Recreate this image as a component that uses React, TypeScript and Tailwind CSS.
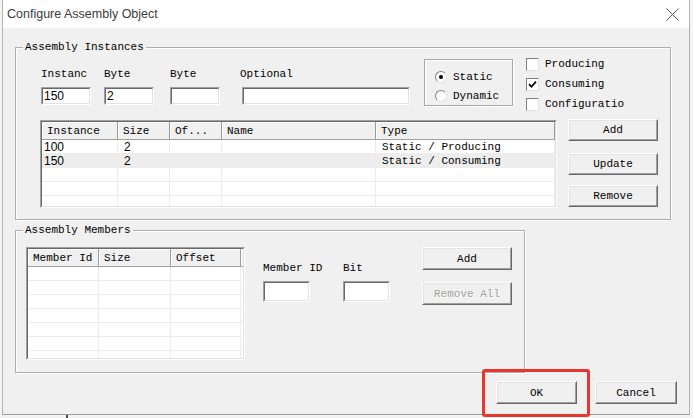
import React from 'react';

const mono = "font-['Liberation_Mono',monospace] text-[11px] leading-[14px]";
const sans = "font-['Liberation_Sans',Arial,sans-serif] text-[12px] leading-[14px]";

type Col = { label: string; w: string; font: string; pl: string };

function ListView({
  cols,
  rows,
  className,
  highlight,
}: {
  cols: Col[];
  rows: string[][];
  className: string;
  highlight?: number;
}) {
  return (
    <div className={`border border-t-[#a0a0a0] border-l-[#a0a0a0] border-b-[#fdfdfd] border-r-[#fdfdfd] ${className}`}>
      <div className="h-full overflow-hidden bg-white border border-t-[#696969] border-l-[#696969] border-b-[#e3e3e3] border-r-[#e3e3e3]">
        <div className="flex h-[18px] bg-[#f0f0f0] border-b border-b-[#a0a0a0]">
          {cols.map((c) => (
            <div
              key={c.label}
              className={`${c.w} shrink-0 flex items-center pl-[5px] whitespace-nowrap overflow-hidden border-r border-r-[#9a9a9a] shadow-[inset_1px_1px_0_#ffffff] ${mono}`}
            >
              {c.label}
            </div>
          ))}
          <div className="flex-1 shadow-[inset_1px_1px_0_#ffffff]" />
        </div>
        {rows.map((r, i) => (
          <div
            key={i}
            className={`flex h-[14px] border-b border-b-[#ececec] ${i === highlight ? 'bg-[#ededed]' : ''}`}
          >
            {cols.map((c, j) => (
              <div
                key={j}
                className={`${c.w} shrink-0 flex items-center whitespace-nowrap overflow-hidden border-r border-r-[#ececec] ${c.pl} ${c.font}`}
              >
                {r[j]}
              </div>
            ))}
          </div>
        ))}
      </div>
    </div>
  );
}

function Field({ value, className }: { value?: string; className: string }) {
  return (
    <div className={`bg-white border border-t-[#a0a0a0] border-l-[#a0a0a0] border-b-white border-r-white ${className}`}>
      <div className={`h-full flex items-center pl-[1px] border border-t-[#696969] border-l-[#696969] border-b-[#e3e3e3] border-r-[#e3e3e3] ${sans}`}>
        {value}
      </div>
    </div>
  );
}

function Btn({ label, className, disabled }: { label: string; className: string; disabled?: boolean }) {
  return (
    <div className={`bg-[#f0f0f0] border border-t-white border-l-white border-b-[#696969] border-r-[#696969] ${className}`}>
      <div
        className={`h-full flex items-center justify-center border border-t-[#e3e3e3] border-l-[#e3e3e3] border-b-[#a0a0a0] border-r-[#a0a0a0] ${mono} ${
          disabled ? 'text-[#a0a0a0] [text-shadow:1px_1px_0_#ffffff]' : ''
        }`}
      >
        {label}
      </div>
    </div>
  );
}

function Radio({ checked }: { checked?: boolean }) {
  return (
    <div className="w-[12px] h-[12px] shrink-0 rounded-full bg-white border border-t-[#808080] border-l-[#808080] border-b-[#e3e3e3] border-r-[#e3e3e3] flex items-center justify-center">
      {checked && <div className="w-[4px] h-[4px] rounded-full bg-black" />}
    </div>
  );
}

function Check({ checked, label }: { checked?: boolean; label: string }) {
  return (
    <div className="flex items-center h-[20px]">
      <div className="w-[13px] h-[13px] shrink-0 bg-white border border-t-[#808080] border-l-[#808080] border-b-[#e3e3e3] border-r-[#e3e3e3] flex items-center justify-center">
        {checked && (
          <svg width="9" height="9" viewBox="0 0 9 9">
            <path d="M1 4.2 L3.4 6.8 L8 1.6" fill="none" stroke="#000" strokeWidth="1.7" />
          </svg>
        )}
      </div>
      <span className={`ml-[6px] whitespace-nowrap ${mono}`}>{label}</span>
    </div>
  );
}

const instanceCols: Col[] = [
  { label: 'Instance', w: 'w-[76px]', font: sans, pl: 'pl-[2px]' },
  { label: 'Size', w: 'w-[52px]', font: sans, pl: 'pl-[6px]' },
  { label: 'Of...', w: 'w-[52px]', font: sans, pl: 'pl-[6px]' },
  { label: 'Name', w: 'w-[154px]', font: mono, pl: 'pl-[6px]' },
  { label: 'Type', w: 'w-[179px]', font: mono, pl: 'pl-[6px]' },
];

const memberCols: Col[] = [
  { label: 'Member Id', w: 'w-[71px]', font: sans, pl: 'pl-[2px]' },
  { label: 'Size', w: 'w-[72px]', font: sans, pl: 'pl-[6px]' },
  { label: 'Offset', w: 'w-[70px]', font: sans, pl: 'pl-[6px]' },
];

export default function App() {
  return (
    <div className="relative w-[693px] h-[418px] overflow-hidden bg-[#f4f4f4] text-black">
      <div className="ml-[2px] w-[688px] h-[415px] flex flex-col border-x border-b border-x-[#b4b4b4] border-b-[#9a9a9a] bg-[#f0f0f0]">
        <div className="h-[28px] shrink-0 bg-white flex items-center justify-between pl-[4px] pr-[10px]">
          <span className="font-['Liberation_Sans',Arial,sans-serif] text-[12.5px] text-[#3c3c3c]">
            Configure Assembly Object
          </span>
          <svg width="13" height="13" viewBox="0 0 13 13">
            <path d="M0.5 0.5 L12.5 12.5 M12.5 0.5 L0.5 12.5" stroke="#5a5a5a" strokeWidth="1" />
          </svg>
        </div>

        <div className="flex-1 pl-[12px] pt-[19px]">
          {/* Assembly Instances */}
          <div className="relative w-[656px] h-[173px] border border-[#adadad] shadow-[inset_1px_1px_0_#ffffff,1px_1px_0_#ffffff]">
            <span className={`absolute top-[-8px] left-[7px] px-[2px] bg-[#f0f0f0] ${mono}`}>Assembly Instances</span>

            <div className="flex items-start h-[72px] pt-[9px]">
              <div className="flex ml-[25px]">
                <div className="flex flex-col w-[50px]">
                  <span className={`mt-[10px] whitespace-nowrap ${mono}`}>Instanc</span>
                  <Field value="150" className="mt-[6px] h-[18px] w-[50px]" />
                </div>
                <div className="flex flex-col w-[50px] ml-[13px]">
                  <span className={`mt-[10px] whitespace-nowrap ${mono}`}>Byte</span>
                  <Field value="2" className="mt-[6px] h-[18px] w-[50px]" />
                </div>
                <div className="flex flex-col w-[50px] ml-[16px]">
                  <span className={`mt-[10px] whitespace-nowrap ${mono}`}>Byte</span>
                  <Field className="mt-[6px] h-[18px] w-[50px]" />
                </div>
                <div className="flex flex-col w-[168px] ml-[22px]">
                  <span className={`mt-[10px] -ml-[2px] whitespace-nowrap ${mono}`}>Optional</span>
                  <Field className="mt-[6px] h-[18px] w-[168px]" />
                </div>
              </div>

              <div className="ml-[14px] mt-[2px] w-[89px] h-[47px] flex flex-col gap-[7px] pt-[11px] pl-[10px] border border-[#a8a8a8] shadow-[inset_1px_1px_0_#ffffff,1px_1px_0_#ffffff]">
                <div className="flex items-center h-[12px]">
                  <Radio checked />
                  <span className={`ml-[6px] whitespace-nowrap ${mono}`}>Static</span>
                </div>
                <div className="flex items-center h-[12px]">
                  <Radio />
                  <span className={`ml-[6px] whitespace-nowrap ${mono}`}>Dynamic</span>
                </div>
              </div>

              <div className="ml-[13px] -mt-[3px] flex flex-col">
                <Check label="Producing" />
                <Check checked label="Consuming" />
                <Check label="Configuratio" />
              </div>
            </div>

            <div className="flex pl-[24px]">
              <ListView
                cols={instanceCols}
                rows={[
                  ['100', '2', '', '', 'Static / Producing'],
                  ['150', '2', '', '', 'Static / Consuming'],
                  ['', '', '', '', ''],
                  ['', '', '', '', ''],
                  ['', '', '', '', ''],
                ]}
                highlight={1}
                className="w-[517px] h-[88px]"
              />
              <div className="ml-[11px] flex flex-col">
                <Btn label="Add" className="-mt-[1px] w-[90px] h-[22px]" />
                <Btn label="Update" className="mt-[12px] w-[90px] h-[22px]" />
                <Btn label="Remove" className="mt-[10px] w-[90px] h-[22px]" />
              </div>
            </div>
          </div>

          {/* Assembly Members */}
          <div className="relative mt-[10px] w-[510px] h-[143px] border border-[#adadad] shadow-[inset_1px_1px_0_#ffffff,1px_1px_0_#ffffff]">
            <span className={`absolute top-[-8px] left-[7px] px-[2px] bg-[#f0f0f0] ${mono}`}>Assembly Members</span>
            <div className="flex items-start pl-[10px]">
              <ListView
                cols={memberCols}
                rows={[
                  ['', '', ''],
                  ['', '', ''],
                  ['', '', ''],
                  ['', '', ''],
                  ['', '', ''],
                  ['', '', ''],
                  ['', '', ''],
                ]}
                className="mt-[16px] w-[219px] h-[113px]"
              />
              <div className="ml-[18px] mt-[30px] flex flex-col w-[47px]">
                <span className={`whitespace-nowrap ${mono}`}>Member ID</span>
                <Field className="mt-[6px] w-[47px] h-[21px]" />
              </div>
              <div className="ml-[33px] mt-[30px] flex flex-col w-[47px]">
                <span className={`whitespace-nowrap ${mono}`}>Bit</span>
                <Field className="mt-[6px] w-[47px] h-[21px]" />
              </div>
              <div className="ml-[32px] mt-[16px] flex flex-col">
                <Btn label="Add" className="w-[90px] h-[23px]" />
                <Btn label="Remove All" disabled className="mt-[12px] w-[90px] h-[23px]" />
              </div>
            </div>
          </div>

          <div className="flex mt-[8px] ml-[481px]">
            <Btn label="OK" className="w-[81px] h-[23px]" />
            <Btn label="Cancel" className="ml-[18px] w-[82px] h-[23px]" />
          </div>
        </div>
      </div>
      <div className="flex h-[3px]">
        <div className="ml-[66px] w-[2px] bg-[#4a4a4a]" />
      </div>

      <div className="absolute left-[482px] top-[369px] w-[108px] h-[48px] border-[3px] border-[#e8352d] rounded-[3px]" />
    </div>
  );
}
